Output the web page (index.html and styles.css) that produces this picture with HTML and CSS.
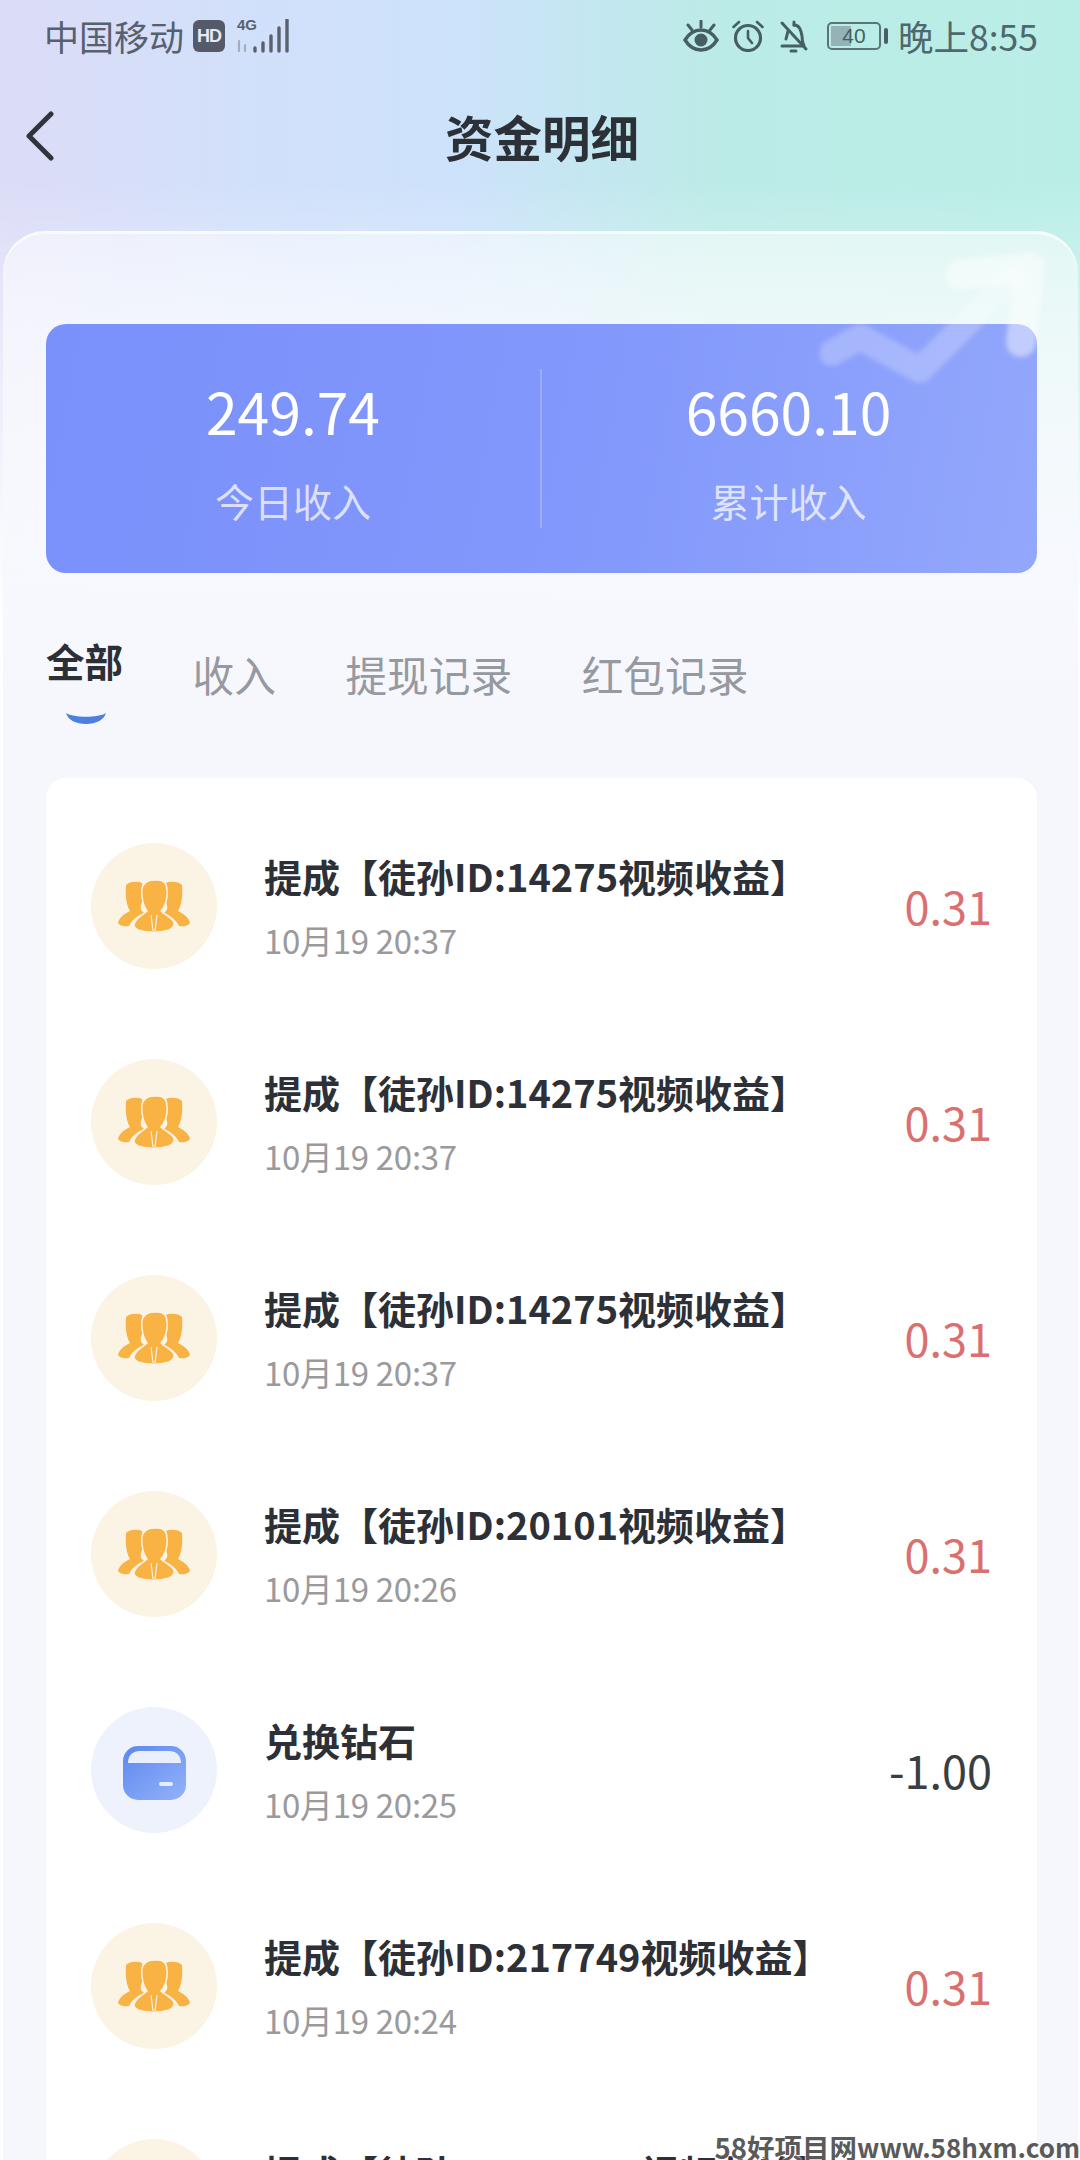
FILE: index.html
```html
<!DOCTYPE html>
<html lang="zh-CN">
<head>
<meta charset="utf-8">
<title>资金明细</title>
<link rel="stylesheet" href="styles.css">
</head>
<body>
<svg class="defs" width="0" height="0" aria-hidden="true">
  <defs>
    <linearGradient id="cardFill" x1="0" y1="0" x2="1" y2="1">
      <stop offset="0" stop-color="#5c88ee"/>
      <stop offset="1" stop-color="#94b2fa"/>
    </linearGradient>
    <symbol id="team" viewBox="0 0 72 52">
      <path fill="#f9b244" d="M8 5C12 1 20 1 24 3V22C22 27 22 30 26 33C19 36 13 41 11 46C6 47 1 45 0 43C1 38 6 34 12 31C9 26 7 18 8 5Z"/>
      <path fill="#f9b244" d="M64 5C60 1 52 1 48 3V22C50 27 50 30 46 33C53 36 59 41 61 46C66 47 71 45 72 43C71 38 66 34 60 31C63 26 65 18 64 5Z"/>
      <path fill="#f9b244" stroke="#fcf3e3" stroke-width="1.5" d="M24 8C27 0 33 0 39 0C46 0 49 4 49 10C50 18 47 27 43 31C46 34 53 37 56 42C57 46 55 48 51 50C41 53 30 53 20 50C16 48 15 45 17 42C20 37 26 34 29 31C25 26 23 16 24 8Z"/>
      <path fill="none" stroke="#fcf3e3" stroke-width="1.2" d="M33 35L35 51M39 35L37 51"/>
    </symbol>
    <symbol id="card" viewBox="0 0 63 54">
      <rect width="63" height="54" rx="15" fill="url(#cardFill)"/>
      <path fill="#e9effd" d="M5 17C5 9 10 5 17 5H46C53 5 58 9 58 17Z"/>
      <rect x="36" y="36" width="14" height="4" rx="2" fill="#e6edfe"/>
    </symbol>
  </defs>
</svg>

<div class="page">
  <div class="statusbar">
    <div class="status-left">
      <span class="carrier">中国移动</span>
      <span class="hd">HD</span>
      <div class="net">
        <span class="net-label">4G</span>
        <svg class="signal" width="54" height="34" viewBox="0 0 54 34" aria-hidden="true">
          <g fill="none" stroke="#59616d" stroke-width="3.4" stroke-linecap="round">
            <path d="M20 29V32M28 24V32M36 17V32M44 9V32M52 1V32"/>
            <path stroke="#a5adb8" stroke-width="2.2" d="M4 22V32M10 26V32"/>
          </g>
        </svg>
      </div>
    </div>
    <div class="status-right">
      <svg class="st-eye" width="36" height="32" viewBox="0 0 36 32" aria-hidden="true">
        <g fill="none" stroke="#465f63" stroke-width="3.4">
          <path d="M2 20C7 12 12 10 18 10C24 10 29 12 34 20C29 28 24 30 18 30C12 30 7 28 2 20Z"/>
          <path stroke-linecap="round" stroke-width="3" d="M18 1V7M5 5L9 10M31 5L27 10"/>
        </g>
        <circle cx="18" cy="20" r="6.5" fill="#465f63"/>
      </svg>
      <svg class="st-alarm" width="32" height="32" viewBox="0 0 32 32" aria-hidden="true">
        <g fill="none" stroke="#465f63" stroke-width="3.2" stroke-linecap="round">
          <circle cx="16" cy="18" r="12.5"/>
          <path stroke-width="2.6" d="M16 11V18L20 23M1.5 7L7 2M30.5 7L25 2"/>
        </g>
      </svg>
      <svg class="st-bell" width="30" height="34" viewBox="0 0 30 34" aria-hidden="true">
        <g fill="none" stroke="#465f63" stroke-width="3" stroke-linecap="round" stroke-linejoin="round">
          <path d="M3 27H25M7 20L9 12M15 6C21 6 22 12 23 17C23 22 24 25 25 27"/>
          <path d="M15 6V3M3 4L27 30"/>
          <path d="M12 32H17"/>
        </g>
      </svg>
      <div class="battery">
        <span class="battery-cell"><span class="battery-level"></span><span class="battery-num">40</span></span>
        <span class="battery-nub"></span>
      </div>
      <span class="clock">晚上8:55</span>
    </div>
  </div>

  <header class="navbar">
    <svg class="back" width="32" height="50" viewBox="0 0 32 50" aria-hidden="true">
      <path d="M27 3L5 25L27 47" fill="none" stroke="#2f353a" stroke-width="5" stroke-linecap="round" stroke-linejoin="round"/>
    </svg>
    <h1 class="nav-title">资金明细</h1>
    <span></span>
  </header>

  <main class="sheet">
    <section class="stats">
      <div class="stat stat-first">
        <div class="stat-num">249.74</div>
        <div class="stat-label">今日收入</div>
      </div>
      <div class="stat stat-second">
        <div class="stat-num">6660.10</div>
        <div class="stat-label">累计收入</div>
      </div>
    </section>
    <svg class="watermark-arrow" width="240" height="150" viewBox="0 0 240 150" aria-hidden="true">
      <g fill="none" stroke="#fff" stroke-opacity=".24" stroke-width="26" stroke-linejoin="round" stroke-linecap="round">
        <path d="M12 108L40 92L100 125L195 30"/>
        <path stroke-opacity=".45" stroke-width="30" d="M140 30L210 22L201 97"/>
      </g>
    </svg>

    <nav class="tabs">
      <div class="tab tab-active">
        <span>全部</span>
        <svg class="tab-mark" width="40" height="11" viewBox="0 0 40 11" aria-hidden="true">
          <path d="M0 0C8 5 32 5 40 0C38 7 30 11 20 11C10 11 2 7 0 0Z" fill="#4b7fe2"/>
        </svg>
      </div>
      <div class="tab">收入</div>
      <div class="tab">提现记录</div>
      <div class="tab">红包记录</div>
    </nav>

    <section class="list">
      <article class="row">
        <div class="avatar avatar-gold"><svg class="ic-team"><use href="#team"/></svg></div>
        <div class="row-text"><div class="row-title">提成【徒孙ID:14275视频收益】</div><div class="row-date">10月19 20:37</div></div>
        <div class="amount amount-plus">0.31</div>
      </article>
      <article class="row">
        <div class="avatar avatar-gold"><svg class="ic-team"><use href="#team"/></svg></div>
        <div class="row-text"><div class="row-title">提成【徒孙ID:14275视频收益】</div><div class="row-date">10月19 20:37</div></div>
        <div class="amount amount-plus">0.31</div>
      </article>
      <article class="row">
        <div class="avatar avatar-gold"><svg class="ic-team"><use href="#team"/></svg></div>
        <div class="row-text"><div class="row-title">提成【徒孙ID:14275视频收益】</div><div class="row-date">10月19 20:37</div></div>
        <div class="amount amount-plus">0.31</div>
      </article>
      <article class="row">
        <div class="avatar avatar-gold"><svg class="ic-team"><use href="#team"/></svg></div>
        <div class="row-text"><div class="row-title">提成【徒孙ID:20101视频收益】</div><div class="row-date">10月19 20:26</div></div>
        <div class="amount amount-plus">0.31</div>
      </article>
      <article class="row">
        <div class="avatar avatar-blue"><svg class="ic-card"><use href="#card"/></svg></div>
        <div class="row-text"><div class="row-title">兑换钻石</div><div class="row-date">10月19 20:25</div></div>
        <div class="amount">-1.00</div>
      </article>
      <article class="row">
        <div class="avatar avatar-gold"><svg class="ic-team"><use href="#team"/></svg></div>
        <div class="row-text"><div class="row-title">提成【徒孙ID:217749视频收益】</div><div class="row-date">10月19 20:24</div></div>
        <div class="amount amount-plus">0.31</div>
      </article>
      <article class="row">
        <div class="avatar avatar-gold"><svg class="ic-team"><use href="#team"/></svg></div>
        <div class="row-text"><div class="row-title">提成【徒孙ID:217749视频收益】</div><div class="row-date">10月19 20:24</div></div>
        <div class="amount amount-plus">0.31</div>
      </article>
    </section>
  </main>

  <div class="site-mark"><span class="site-cn">58好项目网</span><span class="site-en">www.58hxm.com</span></div>
</div>
</body>
</html>
```

FILE: styles.css
```css
* { box-sizing: border-box; }

html, body {
  margin: 0;
  padding: 0;
}

body {
  font-family: "Noto Sans CJK SC", "Noto Sans", sans-serif;
  background: #fff;
}

.defs { position: absolute; }

.page {
  position: relative;
  width: 1080px;
  height: 2160px;
  overflow: hidden;
  background:
    linear-gradient(180deg, rgba(255,255,255,0) 0, rgba(255,255,255,0) 180px, rgba(255,255,255,.3) 300px, #fff 620px),
    linear-gradient(90deg, #dcdcf7 0, #d2e0fa 22%, #cde2fb 42%, #bcebe7 66%, #b9eee6 100%);
}

/* status bar */
.statusbar {
  height: 72px;
  display: flex;
  align-items: center;
  justify-content: space-between;
  padding: 0 42px 0 44px;
}

.status-left, .status-right {
  display: flex;
  align-items: center;
}

.carrier {
  font-size: 35px;
  line-height: 40px;
  color: #56606f;
}

.hd {
  width: 32px;
  height: 32px;
  margin-left: 9px;
  border-radius: 6px;
  background: #545a6a;
  color: #e6e9f6;
  font-family: "Liberation Sans", sans-serif;
  font-size: 18px;
  font-weight: 700;
  line-height: 32px;
  text-align: center;
  letter-spacing: -1px;
}

.net {
  position: relative;
  width: 54px;
  height: 34px;
  margin-left: 10px;
}

.net-label {
  position: absolute;
  top: -2px;
  left: 2px;
  font-family: "Liberation Sans", sans-serif;
  font-size: 15px;
  font-weight: 700;
  line-height: 16px;
  color: #59616d;
}

.signal { display: block; }

.st-eye { margin-right: 13px; }
.st-alarm { margin-right: 15px; }
.st-bell { margin-right: 18px; }

.battery {
  display: flex;
  align-items: center;
  margin-right: 10px;
}

.battery-cell {
  position: relative;
  display: block;
  width: 54px;
  height: 28px;
  border: 2px solid #5b7478;
  border-radius: 5px;
  overflow: hidden;
}

.battery-level {
  position: absolute;
  top: 2px;
  bottom: 2px;
  left: 2px;
  width: 20px;
  background: #93b3b6;
}

.battery-num {
  position: relative;
  display: block;
  font-family: "Liberation Sans", sans-serif;
  font-size: 21px;
  line-height: 24px;
  text-align: center;
  color: #465f63;
}

.battery-nub {
  width: 4px;
  height: 16px;
  margin-left: 3px;
  border-radius: 2px;
  background: #465f63;
}

.clock {
  font-size: 35.5px;
  line-height: 40px;
  color: #4e686c;
}

/* nav */
.navbar {
  height: 128px;
  display: grid;
  grid-template-columns: 1fr auto 1fr;
  align-items: center;
  padding: 0 20px 0 24px;
}

.back { display: block; }

.nav-title {
  margin: 0;
  font-size: 48.5px;
  line-height: 60px;
  font-weight: 700;
  color: #2c3137;
}

/* sheet */
.sheet {
  position: relative;
  margin: 31px 2px 0 3px;
  padding: 93px 41px 0 43px;
  border-radius: 42px 42px 0 0;
  background: linear-gradient(180deg, rgba(255,255,255,.5) 0, rgba(247,249,254,.82) 260px, #f5f7fd 480px);
  box-shadow: inset 0 3px 0 rgba(255,255,255,.7);
}

.stats {
  height: 249px;
  display: flex;
  padding-top: 56px;
  border-radius: 20px;
  background: linear-gradient(100deg, #7a90fb 0, #8298fb 55%, #93a7fb 100%);
  color: #fff;
}

.watermark-arrow {
  position: absolute;
  top: 14px;
  right: 18px;
  pointer-events: none;
  filter: blur(2.5px);
}

.stat {
  text-align: center;
}

.stat-first {
  flex: none;
  width: 494px;
}

.stat-second {
  position: relative;
  flex: 1;
}

.stat-second::before {
  content: "";
  position: absolute;
  top: -11px;
  left: 0;
  width: 2px;
  height: 159px;
  background: rgba(255,255,255,.22);
}

.stat-num {
  font-size: 57px;
  line-height: 60px;
  font-weight: 400;
}

.stat-label {
  margin-top: 35px;
  font-size: 39px;
  line-height: 50px;
  color: rgba(255,255,255,.72);
}

/* tabs */
.tabs {
  display: flex;
  align-items: flex-start;
  gap: 69.5px;
  margin-top: 62px;
  font-size: 41.7px;
  line-height: 50px;
  color: #96999f;
}

.tab { padding-top: 14px; }

.tab-active {
  display: flex;
  flex-direction: column;
  align-items: center;
  padding-top: 0;
  font-size: 38.5px;
  font-weight: 700;
  color: #2c2f36;
}

.tab-mark {
  display: block;
  margin: 28px 0 0 2px;
}

/* list */
.list {
  margin-top: 54px;
  padding-top: 21px;
  border-radius: 20px 20px 0 0;
  background: #fff;
}

.row {
  height: 216px;
  display: flex;
  align-items: center;
  padding: 0 45px;
}

.avatar {
  flex: none;
  width: 126px;
  height: 126px;
  margin-bottom: 2px;
  border-radius: 50%;
  display: flex;
  align-items: center;
  justify-content: center;
}

.avatar-gold { background: #fbf3e3; }
.avatar-blue { background: #eef2fd; }

.ic-team {
  display: block;
  width: 72px;
  height: 52px;
}

.ic-card {
  display: block;
  width: 63px;
  height: 54px;
  margin-top: 6px;
}

.row-text {
  flex: 1;
  min-width: 0;
  margin-left: 47px;
}

.row-title {
  font-size: 38px;
  line-height: 50px;
  font-weight: 700;
  color: #2d3036;
  white-space: nowrap;
}

.row-date {
  margin-top: 16px;
  font-size: 33px;
  line-height: 46px;
  color: #9a9a9d;
  letter-spacing: -.3px;
}

.amount {
  flex: none;
  margin-bottom: 2px;
  font-size: 45px;
  line-height: 60px;
  color: #3a3d42;
}

.amount-plus { color: #d9706f; }

/* overlay site mark */
.site-mark {
  position: absolute;
  right: 0;
  bottom: 0;
  display: flex;
  align-items: center;
  height: 26px;
  font-weight: 700;
  color: #5a5a5a;
  text-shadow: 0 0 2px #fff, 0 0 2px #fff;
}

.site-cn {
  font-size: 27.5px;
  line-height: 26px;
}

.site-en {
  font-size: 26px;
  line-height: 26px;
}
```
